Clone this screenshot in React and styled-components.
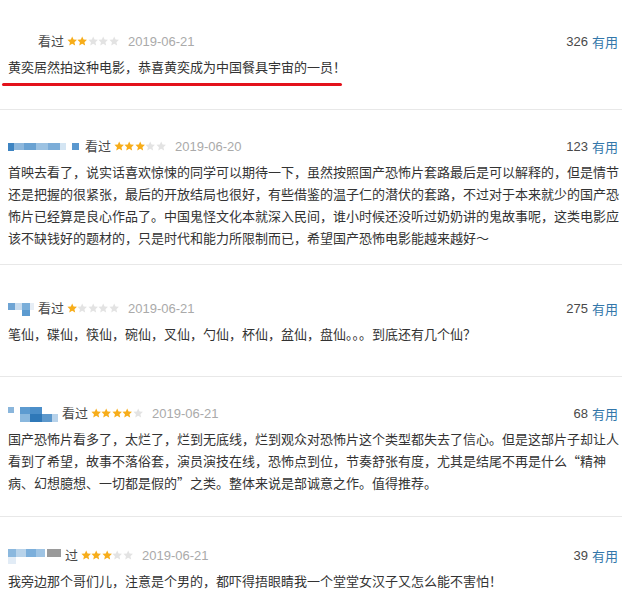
import React from "react";
import styled, { createGlobalStyle } from "styled-components";

const GlobalStyle = createGlobalStyle`
  body {
    margin: 0;
    background: #fff;
  }
`;

const List = styled.div`
  width: 622px;
  background: #fff;
`;

const Card = styled.div`
  padding: ${(p) => p.$top}px 2px ${(p) => p.$bottom}px 8px;
  border-bottom: ${(p) => (p.$last ? "none" : "1px solid #e8e8e8")};
`;

const Header = styled.div`
  display: flex;
  align-items: center;
  justify-content: space-between;
  height: 20px;
  margin-right: 2px;
  font-family: "Liberation Sans", Helvetica, Arial, "Noto Sans CJK SC", sans-serif;
  font-size: 13px;
`;

const Info = styled.div`
  display: flex;
  align-items: center;
`;

const Mosaic = styled.svg`
  display: block;
  margin-right: 4px;
  flex-shrink: 0;
`;

const Watched = styled.span`
  color: #494949;
  font-family: "Noto Sans CJK SC", sans-serif;
  line-height: 20px;
`;

const Stars = styled.span`
  display: flex;
  margin: 0 9px 0 3px;
`;

const DateText = styled.span`
  color: #aaa;
`;

const Votes = styled.div`
  color: #494949;
  display: flex;
  align-items: center;
  gap: 4px;
`;

const Useful = styled.span`
  color: #3377aa;
  font-family: "Noto Sans CJK SC", sans-serif;
`;

const Body = styled.p`
  margin: 5px 0 0;
  font-family: "Noto Sans CJK SC", sans-serif;
  font-size: 13px;
  line-height: 22px;
  color: #333;
`;

const Underline = styled.div`
  width: 340px;
  height: 3px;
  margin: 5px 0 0 -6px;
  border-radius: 2px;
  background: #e3121b;
`;

const Star = ({ on }) => (
  <svg width="10.4" height="10" viewBox="0 0 24 23">
    <path
      d="M12 1l3.2 7.1 7.8.8-5.8 5.3 1.6 7.7L12 18l-6.8 3.9 1.6-7.7L1 8.9l7.8-.8z"
      fill={on ? "#f7ad1a" : "#e3e3e3"}
    />
  </svg>
);

const Rating = ({ value }) => (
  <Stars>
    {[1, 2, 3, 4, 5].map((i) => (
      <Star key={i} on={i <= value} />
    ))}
  </Stars>
);

const Blur = ({ width, height, cells }) => (
  <Mosaic width={width} height={height}>
    {cells.map(([x, y, w, h, c], i) => (
      <rect key={i} x={x} y={y} width={w} height={h} fill={c} />
    ))}
  </Mosaic>
);

const reviews = [
  {
    top: 31,
    bottom: 23,
    mosaic: { width: 26, height: 14, cells: [] },
    watched: "看过",
    rating: 2,
    date: "2019-06-21",
    votes: 326,
    text: "黄奕居然拍这种电影，恭喜黄奕成为中国餐具宇宙的一员！",
    marked: true,
  },
  {
    top: 26,
    bottom: 15,
    mosaic: {
      width: 73,
      height: 14,
      cells: [
        [0, 4, 6, 8, "#3d84c2"],
        [6, 4, 10, 7, "#8db7dc"],
        [16, 4, 12, 7, "#6aa2d2"],
        [28, 4, 12, 7, "#9cc2e2"],
        [40, 4, 12, 7, "#7cadd8"],
        [52, 4, 6, 7, "#d4e5f3"],
        [64, 4, 7, 7, "#5a98cf"],
      ],
    },
    watched: "看过",
    rating: 3,
    date: "2019-06-20",
    votes: 123,
    text:
      "首映去看了，说实话喜欢惊悚的同学可以期待一下，虽然按照国产恐怖片套路最后是可以解释的，但是情节还是把握的很紧张，最后的开放结局也很好，有些借鉴的温子仁的潜伏的套路，不过对于本来就少的国产恐怖片已经算是良心作品了。中国鬼怪文化本就深入民间，谁小时候还没听过奶奶讲的鬼故事呢，这类电影应该不缺钱好的题材的，只是时代和能力所限制而已，希望国产恐怖电影能越来越好～",
  },
  {
    top: 33,
    bottom: 31,
    mosaic: {
      width: 26,
      height: 16,
      cells: [
        [0, 3, 7, 7, "#6ea4d4"],
        [7, 3, 7, 7, "#c9dcee"],
        [14, 3, 8, 7, "#7aaed9"],
        [14, 10, 8, 6, "#5c9bd0"],
        [22, 3, 4, 7, "#e7eef6"],
      ],
    },
    watched: "看过",
    rating: 1,
    date: "2019-06-21",
    votes: 275,
    text: "笔仙，碟仙，筷仙，碗仙，叉仙，勺仙，杯仙，盆仙，盘仙。。。到底还有几个仙？",
  },
  {
    top: 26,
    bottom: 22,
    mosaic: {
      width: 50,
      height: 18,
      cells: [
        [0, 3, 6, 6, "#8ab6dc"],
        [12, 3, 10, 7, "#5d9bd0"],
        [22, 3, 12, 7, "#4b8ec9"],
        [12, 10, 10, 8, "#8ab8de"],
        [22, 10, 12, 8, "#2f78b8"],
        [34, 10, 10, 8, "#5c98cc"],
        [44, 10, 6, 8, "#b7d2ea"],
      ],
    },
    watched: "看过",
    rating: 4,
    date: "2019-06-21",
    votes: 68,
    text:
      "国产恐怖片看多了，太烂了，烂到无底线，烂到观众对恐怖片这个类型都失去了信心。但是这部片子却让人看到了希望，故事不落俗套，演员演技在线，恐怖点到位，节奏舒张有度，尤其是结尾不再是什么“精神病、幻想臆想、一切都是假的”之类。整体来说是部诚意之作。值得推荐。",
  },
  {
    top: 28,
    bottom: 20,
    mosaic: {
      width: 53,
      height: 18,
      cells: [
        [0, 3, 8, 8, "#8bb8de"],
        [8, 3, 10, 8, "#b8d3ea"],
        [18, 3, 10, 8, "#7cafdb"],
        [28, 3, 9, 8, "#9fc4e4"],
        [0, 11, 8, 7, "#e2ecf6"],
        [39, 3, 14, 8, "#9a9a9a"],
      ],
    },
    watched: "过",
    rating: 3,
    date: "2019-06-21",
    votes: 39,
    text: "我旁边那个哥们儿，注意是个男的，都吓得捂眼睛我一个堂堂女汉子又怎么能不害怕！",
    last: true,
  },
];

const Review = ({ review }) => (
  <Card $top={review.top} $bottom={review.bottom} $last={review.last}>
    <Header>
      <Info>
        <Blur {...review.mosaic} />
        <Watched>{review.watched}</Watched>
        <Rating value={review.rating} />
        <DateText>{review.date}</DateText>
      </Info>
      <Votes>
        <span>{review.votes}</span>
        <Useful>有用</Useful>
      </Votes>
    </Header>
    <Body>{review.text}</Body>
    {review.marked && <Underline />}
  </Card>
);

const App = () => (
  <>
    <GlobalStyle />
    <List>
      {reviews.map((r, i) => (
        <Review key={i} review={r} />
      ))}
    </List>
  </>
);

export default App;
